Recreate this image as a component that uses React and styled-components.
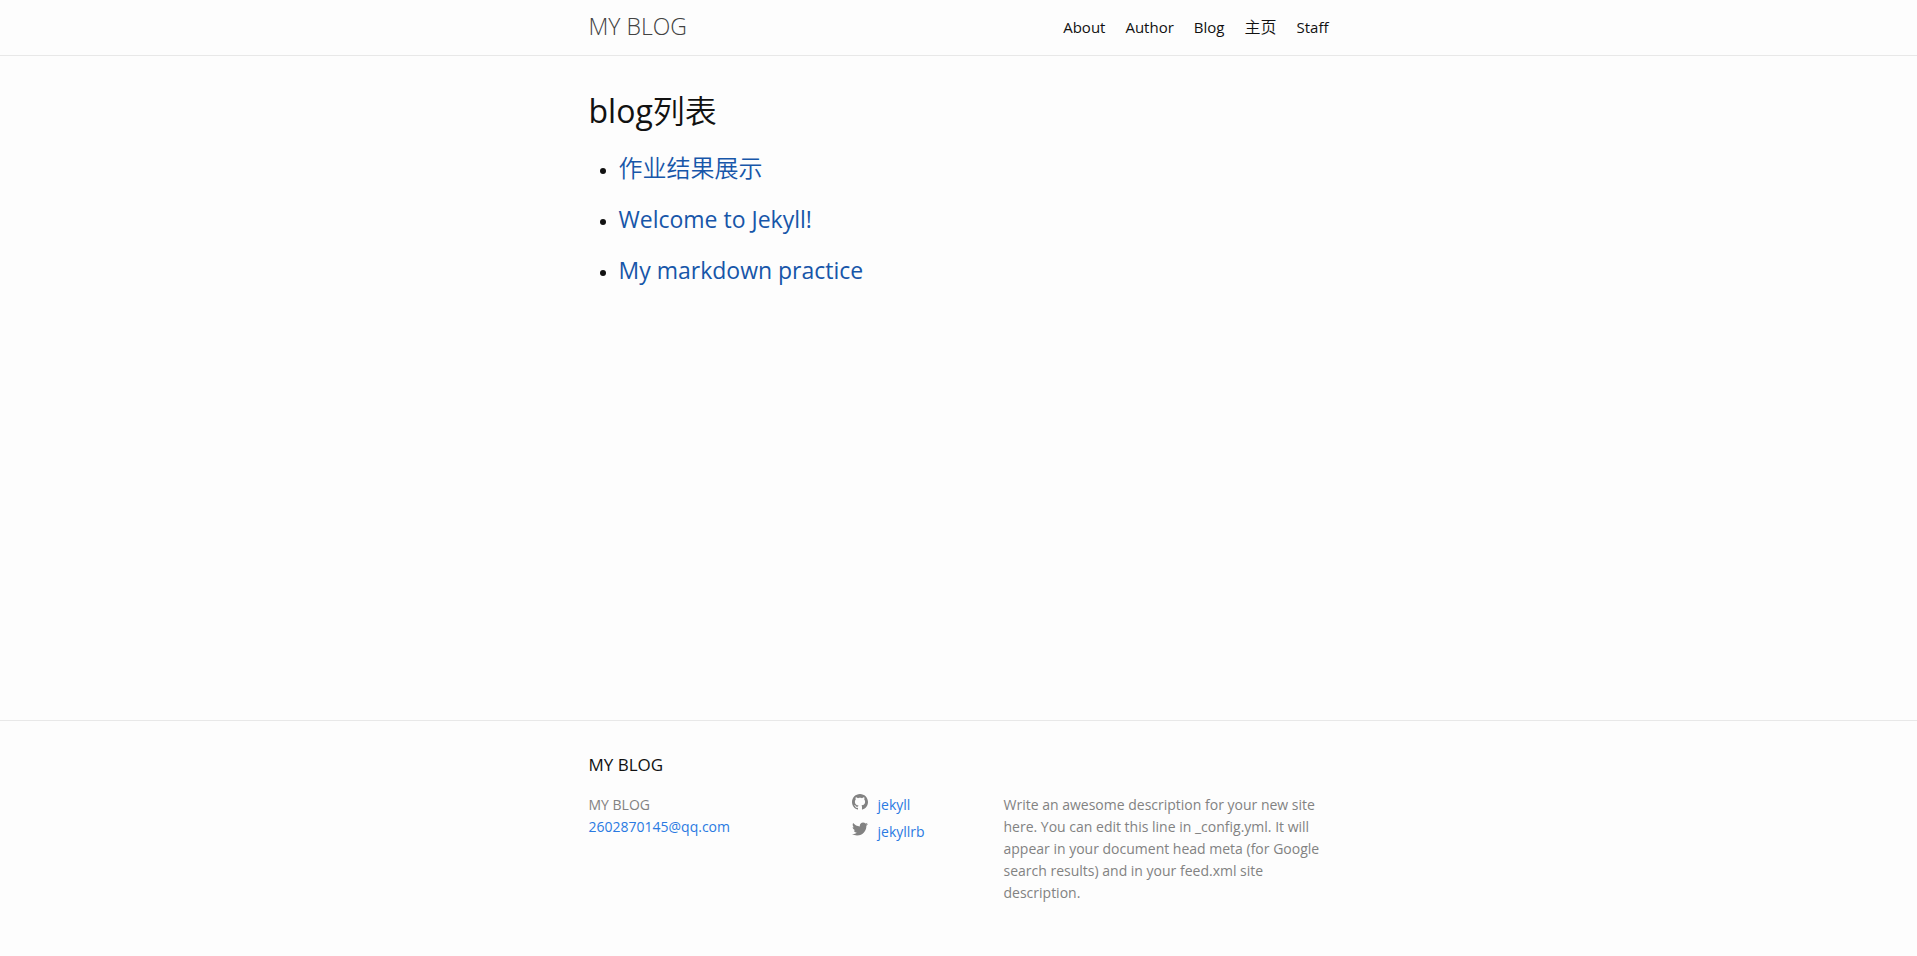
import React from "react";
import styled, { createGlobalStyle } from "styled-components";

const GlobalStyle = createGlobalStyle`
  * { box-sizing: border-box; }
  body {
    margin: 0;
    background: #fdfdfd;
    color: #111;
    font: 400 15px/24px "Open Sans", "Noto Sans CJK SC", sans-serif;
  }
  h1, h2, h3, p, ul { margin: 0; padding: 0; font-weight: 400; }
  a { color: #2a7ae2; text-decoration: none; }
  a:hover { color: #111; text-decoration: underline; }
`;

const Page = styled.div`
  min-height: 100vh;
  display: flex;
  flex-direction: column;
`;

const Wrapper = styled.div`
  max-width: 800px;
  margin: 0 auto;
  padding: 0 30px;
`;

const Header = styled.header`
  border-bottom: 1px solid #e8e8e8;
`;

const HeaderRow = styled(Wrapper)`
  display: flex;
  justify-content: space-between;
  align-items: center;
  min-height: 55px;
  padding-bottom: 2px;
`;

const SiteTitle = styled.a`
  && { color: #424242; }
  font-size: 23px;
  font-weight: 300;
  line-height: 53px;
`;

const Nav = styled.nav`
  display: flex;
  gap: 20px;
`;

const NavLink = styled.a`
  && { color: #111; }
`;

const Main = styled.main`
  flex: 1;
  padding: 31px 0;
`;

const Heading = styled.h1`
  font-size: 32px;
  line-height: 48px;
  margin-bottom: 15px;
`;

const Cjk = styled.span`
  font-size: ${(p) => p.$size}px;
  font-weight: 350;
`;

const PostList = styled.ul`
  margin-left: 30px;
  font-size: 18px;
`;

const PostTitle = styled.h3`
  font-size: 23px;
  line-height: 36px;
  margin-bottom: 15px;
  a { color: #1756a9; }
`;

const Footer = styled.footer`
  border-top: 1px solid #e8e8e8;
  padding: 30px 0 52px;
`;

const FooterHeading = styled.h2`
  font-size: 17px;
  line-height: 27px;
  margin-bottom: 16px;
`;

const FooterColumns = styled.div`
  display: grid;
  grid-template-columns: 263fr 152fr 325fr;
  color: #828282;
  font-size: 14px;
  line-height: 22px;
`;

const ContactList = styled.ul`
  list-style: none;
`;

const SocialItem = styled.li`
  display: flex;
  gap: 10px;
  height: 27px;
  svg { fill: #828282; }
`;

const posts = ["Welcome to Jekyll!", "My markdown practice"];

function GithubIcon() {
  return (
    <svg width="16" height="16" viewBox="0 0 16 16" aria-hidden="true">
      <path fillRule="evenodd" d="M8 0C3.58 0 0 3.582 0 8c0 3.535 2.292 6.533 5.47 7.59.4.075.547-.172.547-.385 0-.19-.007-.693-.01-1.36-2.226.483-2.695-1.073-2.695-1.073-.364-.924-.889-1.17-.889-1.17-.726-.496.055-.486.055-.486.803.056 1.226.824 1.226.824.714 1.223 1.873.87 2.329.665.072-.517.279-.87.508-1.07-1.777-.202-3.645-.888-3.645-3.953 0-.873.312-1.587.823-2.147-.082-.202-.357-1.016.078-2.117 0 0 .672-.215 2.2.82.639-.177 1.323-.266 2.003-.269.68.003 1.364.092 2.003.27 1.527-1.036 2.198-.82 2.198-.82.436 1.1.162 1.914.08 2.116.512.56.822 1.274.822 2.147 0 3.073-1.871 3.749-3.653 3.947.287.247.543.735.543 1.482 0 1.069-.01 1.932-.01 2.194 0 .215.144.464.55.385C13.71 14.531 16 11.534 16 8c0-4.418-3.582-8-8-8z" />
    </svg>
  );
}

function TwitterIcon() {
  return (
    <svg width="16" height="16" viewBox="0 0 16 16" aria-hidden="true">
      <path d="M15.969 3.058c-.586.26-1.217.436-1.878.515.675-.405 1.194-1.045 1.438-1.809-.632.375-1.332.647-2.076.793-.596-.636-1.446-1.033-2.387-1.033-1.806 0-3.27 1.464-3.27 3.27 0 .256.029.506.085.745-2.718-.136-5.128-1.438-6.741-3.417-.281.483-.442 1.045-.442 1.644 0 1.134.577 2.135 1.455 2.722-.536-.017-1.04-.164-1.481-.409v.041c0 1.584 1.127 2.906 2.623 3.206-.274.075-.563.115-.861.115-.211 0-.416-.021-.615-.059.416 1.299 1.624 2.245 3.055 2.271-1.119.877-2.529 1.4-4.061 1.4-.264 0-.524-.015-.78-.046 1.447.928 3.166 1.469 5.013 1.469 6.015 0 9.304-4.983 9.304-9.304 0-.142-.003-.283-.009-.423.639-.461 1.193-1.037 1.632-1.691z" />
    </svg>
  );
}

export default function App() {
  return (
    <Page>
      <GlobalStyle />
      <Header>
        <HeaderRow>
          <SiteTitle href="#">MY BLOG</SiteTitle>
          <Nav>
            <NavLink href="#about">About</NavLink>
            <NavLink href="#author">Author</NavLink>
            <NavLink href="#blog">Blog</NavLink>
            <NavLink href="#home"><Cjk $size={16}>主页</Cjk></NavLink>
            <NavLink href="#staff">Staff</NavLink>
          </Nav>
        </HeaderRow>
      </Header>
      <Main>
        <Wrapper>
          <Heading>blog<Cjk $size={32}>列表</Cjk></Heading>
          <PostList>
            <li><PostTitle><a href="#results"><Cjk $size={24}>作业结果展示</Cjk></a></PostTitle></li>
            {posts.map((title) => (
              <li key={title}><PostTitle><a href="#post">{title}</a></PostTitle></li>
            ))}
          </PostList>
        </Wrapper>
      </Main>
      <Footer>
        <Wrapper>
          <FooterHeading>MY BLOG</FooterHeading>
          <FooterColumns>
            <ContactList>
              <li>MY BLOG</li>
              <li><a href="mailto:2602870145@qq.com">2602870145@qq.com</a></li>
            </ContactList>
            <ContactList>
              <SocialItem><GithubIcon /><a href="#github">jekyll</a></SocialItem>
              <SocialItem><TwitterIcon /><a href="#twitter">jekyllrb</a></SocialItem>
            </ContactList>
            <p>
              Write an awesome description for your new site here. You can edit this line in _config.yml. It will
              appear in your document head meta (for Google search results) and in your feed.xml site description.
            </p>
          </FooterColumns>
        </Wrapper>
      </Footer>
    </Page>
  );
}
